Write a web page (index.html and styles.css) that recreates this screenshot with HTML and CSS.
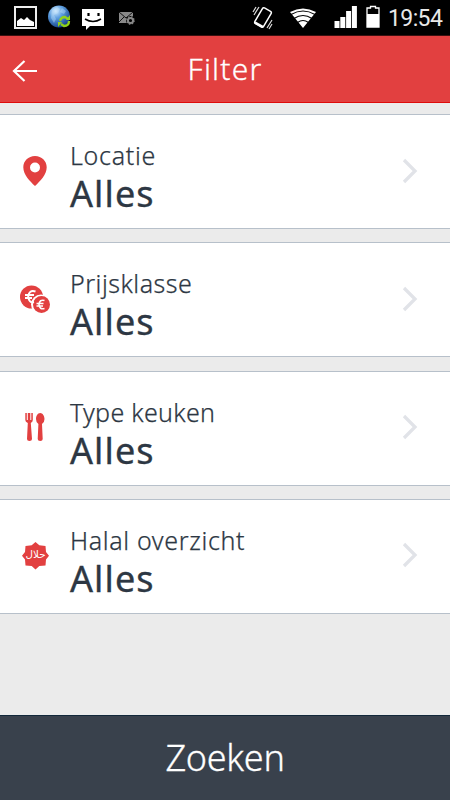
FILE: index.html
```html
<!DOCTYPE html>
<html lang="nl">
<head>
<meta charset="utf-8">
<title>Filter</title>
<link rel="stylesheet" href="styles.css">
</head>
<body>
<div class="status">
  <svg class="status-icons" width="150" height="35" viewBox="0 0 150 35">
    <defs>
      <radialGradient id="globe" cx=".35" cy=".25" r=".8"><stop offset="0" stop-color="#d5edff"/><stop offset=".4" stop-color="#5e9fe0"/><stop offset="1" stop-color="#123f86"/></radialGradient>
    </defs>
    <rect x="15" y="7" width="21" height="21" fill="#000" stroke="#eee" stroke-width="2"/>
    <path d="M17 26V21L21 18L24 20L27 17L30 20L34 22V26Z" fill="#fff"/>
    <circle cx="59" cy="16.500" r="11" fill="url(#globe)"/>
    <path d="M52 10l5-3 3 2-2 4-4 2 2 4-2 4-3-5zM62 8l4 3-2 3-4-2z" fill="#c3e4fb" opacity=".4"/>
    <path d="M60 21q1-4 5-4l3 2M69 21q0 5-5 5l-3-2" fill="none" stroke="#91d11b" stroke-width="2.300"/>
    <path d="M66 20h4v-5zM62 22h-4v5z" fill="#91d11b"/>
    <path d="M82 9h22v17H90l-4 4v-4h-4z" fill="#fff"/>
    <path d="M88.500 13v3M98.500 13v3" stroke="#000" stroke-width="2.200"/>
    <path d="M85 19q8 5 16 0" fill="none" stroke="#000" stroke-width="1.500"/>
    <path d="M119 12h14v6l-4 5h-10z" fill="#888"/>
    <path d="M119 12l7 6 7-6M119 22l5-5" fill="none" stroke="#111" stroke-width="1"/>
    <circle cx="130.500" cy="20.500" r="4.500" fill="#000"/>
    <circle cx="130.500" cy="20.500" r="2.600" fill="none" stroke="#888" stroke-width="2"/>
    <circle cx="130.500" cy="20.500" r="3.700" fill="none" stroke="#888" stroke-width="1.200" stroke-dasharray="1.450 1.450"/>
  </svg>
  <svg class="status-icons" width="140" height="35" viewBox="0 0 140 35">
    <rect x="8" y="8.500" width="10" height="18" rx="1.500" transform="rotate(30 13 17.500)" fill="#000" stroke="#fff" stroke-width="1.500"/>
    <path d="M5 22.500l8 4.500" stroke="#fff" stroke-width="2.500"/>
    <path d="M6 7l-3 5M9 7l-5 8M22 20l-5 8M22 24l-3 5" stroke="#ddd" stroke-width="1.200"/>
    <path d="M40 12q13-7 26 0L53 28z" fill="#fff"/>
    <path d="M41 14.500q12-7 24 0M44 18.500q9-6 18 0M47.500 22.500q5.500-4 11 0" fill="none" stroke="#000" stroke-width="1.100"/>
    <path d="M84.500 21h5v7h-5zM90.300 17h5v11h-5zM96.100 11h5v17h-5zM101.900 6h5v22h-5z" fill="#fff"/>
    <path d="M117 8h3.500V6.500h5V8h3.500v19h-12z" fill="#000" stroke="#fff" stroke-width="1.300"/>
    <path d="M117 14h12v13h-12z" fill="#fff"/>
  </svg>
  <span class="clock">19:54</span>
</div>
<header class="header">
  <svg class="back" width="26" height="24" viewBox="0 0 26 24"><path d="M12.500 2L2 12L12.500 22M2 12H25" fill="none" stroke="#fff" stroke-width="2.200"/></svg>
  <h1 class="title">Filter</h1>
</header>
<main class="list">
  <section class="card">
    <svg class="icon" width="30" height="32" viewBox="0 0 30 32"><path fill-rule="evenodd" fill="#e24040" d="M15 0C8.300 0 3.300 5 3.300 11.200C3.300 19 10 25 15 30C20 25 26.700 19 26.700 11.200C26.700 5 21.700 0 15 0ZM15 6.500a5 5 0 1 1 0 10a5 5 0 1 1 0-10Z"/></svg>
    <div class="text"><div class="label label-location">Locatie</div><div class="value">Alles</div></div>
    <svg class="chevron" width="16" height="26" viewBox="0 0 16 26"><path d="M2 2L13 13L2 24" fill="none" stroke="#e1e3e8" stroke-width="3.300"/></svg>
  </section>
  <section class="card">
    <svg class="icon" width="30" height="32" viewBox="0 0 30 32"><circle cx="11.500" cy="13" r="11.500" fill="#e24040"/><circle cx="21" cy="20.500" r="10" fill="#fff"/><circle cx="21.500" cy="20.500" r="8.500" fill="#e24040"/><path d="M15.500 7.500Q9 5.500 8.200 12.500Q9 19.500 14 18M5 11H14M5 14H12" fill="none" stroke="#fff" stroke-width="2"/><path d="M24.500 16.500Q19.500 15 19 20.500Q19.500 26 24.500 24.500M16.500 19.500H23.500M16.500 22H23" fill="none" stroke="#fff" stroke-width="1.600"/></svg>
    <div class="text"><div class="label label-price">Prijsklasse</div><div class="value">Alles</div></div>
    <svg class="chevron" width="16" height="26" viewBox="0 0 16 26"><path d="M2 2L13 13L2 24" fill="none" stroke="#e1e3e8" stroke-width="3.300"/></svg>
  </section>
  <section class="card">
    <svg class="icon" width="30" height="32" viewBox="0 0 30 32"><path fill="#e24040" d="M5.300 1h1.500v7h1V1h2.500v7h1V1h1.500v7q0 2-2 3L12 27q0 2-2.500 2T7 27l.8-16q-2.500-1-2.500-3zM20.200 1C22.700 1 24.500 4 24.500 7q0 3.500-2.500 5l.7 15q0 2-2.500 2t-2.500-2l.7-15Q16 10.500 16 7c0-3 1.700-6 4.200-6Z"/></svg>
    <div class="text"><div class="label label-kitchen">Type keuken</div><div class="value">Alles</div></div>
    <svg class="chevron" width="16" height="26" viewBox="0 0 16 26"><path d="M2 2L13 13L2 24" fill="none" stroke="#e1e3e8" stroke-width="3.300"/></svg>
  </section>
  <section class="card">
    <svg class="icon" width="30" height="32" viewBox="0 0 30 32"><path fill="#e24040" d="M15.500 2L19.300 5.200L25.500 6L26 12L29 15.700L26 19.500L25.500 25.500L19.300 26L15.500 29.500L11.700 26L5.500 25.500L5 19.500L2 15.700L5 12L5.500 6L11.700 5.200Z"/><text class="halal" x="15.500" y="18" text-anchor="middle" textLength="20" lengthAdjust="spacingAndGlyphs">حلال</text></svg>
    <div class="text"><div class="label label-halal">Halal overzicht</div><div class="value">Alles</div></div>
    <svg class="chevron" width="16" height="26" viewBox="0 0 16 26"><path d="M2 2L13 13L2 24" fill="none" stroke="#e1e3e8" stroke-width="3.300"/></svg>
  </section>
</main>
<button class="search">Zoeken</button>
</body>
</html>
```
FILE: styles.css
```css
* { box-sizing: border-box; }
body {
  margin: 0;
  height: 800px;
  display: flex;
  flex-direction: column;
  background: #ebebeb;
  color: #2d3743;
  font-family: "Noto Sans", "Open Sans", sans-serif;
  overflow: hidden;
}
.status {
  height: 36px;
  flex: none;
  display: flex;
  align-items: flex-start;
  background: #000;
  border-bottom: 1px solid #3c1010;
}
.status-icons { flex: none; }
.status-icons + .status-icons { margin-left: 100px; }
.clock {
  margin-left: -2px;
  color: #e8e8e8;
  font: 23px/37px Roboto, sans-serif;
  letter-spacing: -0.6px;
  white-space: nowrap;
}
.header {
  height: 67px;
  flex: none;
  display: grid;
  grid-template-columns: 50px 1fr 50px;
  align-items: center;
  background: #e24040;
  border-bottom: 1px solid #de0b0b;
}
.back { margin: 3px 0 0 12px; }
.title {
  margin: 0;
  color: #fff;
  font-size: 30px;
  font-weight: 300;
  line-height: 66px;
  text-align: center;
  letter-spacing: 1.2px;
  -webkit-text-stroke: 0.3px #fff;
}
.list {
  flex: 1;
  display: flex;
  flex-direction: column;
  gap: 13.33px;
  padding-top: 11px;
}
.card {
  height: 115px;
  flex: none;
  display: flex;
  align-items: center;
  background: #fff;
  border: solid #b7c0ca;
  border-width: 1px 0;
}
.icon { margin-left: 20px; flex: none; }
.text { flex: 1; margin-left: 20px; padding-top: 10px; }
.label {
  font-size: 25px;
  font-weight: 300;
  line-height: 34px;
  -webkit-text-stroke: 0.25px #2d3743;
}
.label-location { letter-spacing: 0.7px; }
.label-price { letter-spacing: 0.5px; }
.label-kitchen { letter-spacing: 0.3px; }
.label-halal { letter-spacing: 0.65px; }
.value {
  font-size: 36px;
  font-weight: 400;
  line-height: 43px;
  letter-spacing: 1.1px;
  -webkit-text-stroke: 0.35px #2d3743;
}
.chevron { margin: 0 32px 2px 0; flex: none; }
.halal { font: 10px "DejaVu Sans", sans-serif; fill: #fff; }
.search {
  height: 85px;
  flex: none;
  border: 0;
  border-top: 1px solid #12283a;
  background: #39414c;
  color: #fff;
  font: 300 36px/80px "Noto Sans", "Open Sans", sans-serif;
  letter-spacing: -0.3px;
  -webkit-text-stroke: 0.3px #fff;
}
```
